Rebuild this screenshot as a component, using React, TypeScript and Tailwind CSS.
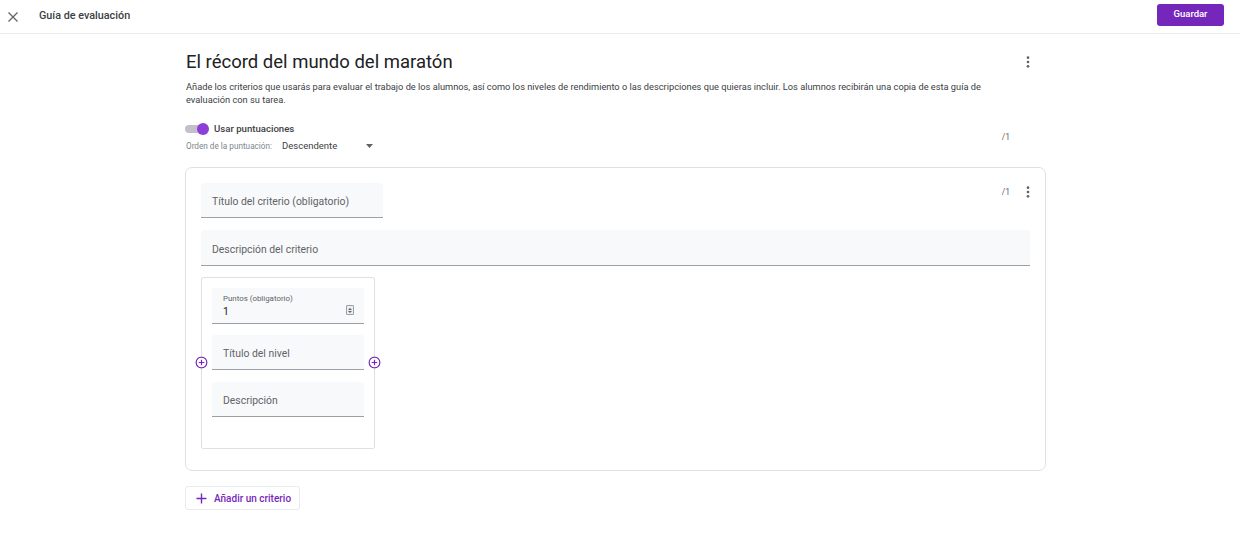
import React from "react";

const font = { fontFamily: "Roboto, 'Noto Sans', Arial, sans-serif" };

function Kebab() {
  return (
    <svg width="16" height="16" viewBox="0 0 24 24" fill="#5f6368">
      <circle cx="12" cy="5.5" r="2" />
      <circle cx="12" cy="12" r="2" />
      <circle cx="12" cy="18.5" r="2" />
    </svg>
  );
}

function PlusCircle() {
  return (
    <svg width="13" height="13" viewBox="0 0 14 14" className="bg-white rounded-full">
      <circle cx="7" cy="7" r="5.8" fill="white" stroke="#7627bb" strokeWidth="1.3" />
      <path d="M7 4v6M4 7h6" stroke="#7627bb" strokeWidth="1.3" />
    </svg>
  );
}

function Field({ label, w, h = "h-[35px]" }: { label: string; w: string; h?: string }) {
  return (
    <div className={`${w} ${h} bg-[#f8f9fa] border-b border-[#9aa0a6] flex items-center px-[11px] pt-[4px] rounded-t-[3px]`}>
      <span className="text-[10.4px] text-[#5f6368]">{label}</span>
    </div>
  );
}

export default function App() {
  return (
    <div className="w-[1240px] h-[544px] bg-white overflow-hidden text-[#202124]" style={font}>
      {/* header */}
      <div className="h-[34px] border-b border-[#e8eaed] flex items-center pl-[7px] pr-[16px]">
        <svg width="12" height="12" viewBox="0 0 12 12">
          <path d="M1.5 1.5l9 9M10.5 1.5l-9 9" stroke="#5f6368" strokeWidth="1.3" />
        </svg>
        <span className="ml-[20px] text-[10.8px] font-medium text-[#3c4043]">Guía de evaluación</span>
        <div className="flex-1" />
        <button className="w-[67px] h-[22px] bg-[#7627bb] rounded-[3px] text-white text-[9.5px] font-medium mt-[-4px]">
          Guardar
        </button>
      </div>

      <div className="ml-[185px] w-[861px]">
        {/* title row */}
        <div className="flex items-center justify-between pt-[16px]">
          <h1 className="text-[18.5px] leading-[24px] text-[#202124] pl-[1px]">El récord del mundo del maratón</h1>
          <div className="mr-[10px]">
            <Kebab />
          </div>
        </div>
        <p className="mt-[6px] pl-[1px] text-[9.25px] leading-[13px] text-[#3c4043] w-[815px]">
          Añade los criterios que usarás para evaluar el trabajo de los alumnos, así como los niveles de rendimiento o las descripciones que quieras incluir. Los alumnos recibirán una copia de esta guía de evaluación con su tarea.
        </p>

        {/* toggle + order */}
        <div className="flex items-center justify-between mt-[16px]">
          <div className="flex flex-col">
            <div className="flex items-center h-[14px]">
              <div className="relative w-[24px] h-[14px] flex items-center">
                <div className="w-[20px] h-[8px] rounded-full bg-[#c5bfcc]" />
                <div className="absolute left-[12px] top-[1px] w-[12px] h-[12px] rounded-full bg-[#8d3fd6]" />
              </div>
              <span className="ml-[5px] text-[9.6px] font-medium text-[#3c4043]">Usar puntuaciones</span>
            </div>
            <div className="flex items-center h-[14px] mt-[3px]">
              <span className="pl-[1px] text-[8.2px] text-[#80868b] w-[97px]">Orden de la puntuación:</span>
              <span className="text-[9.5px] text-[#3c4043] w-[84px]">Descendente</span>
              <svg width="7" height="4" viewBox="0 0 7 4">
                <path d="M0 0h7L3.5 4z" fill="#5f6368" />
              </svg>
            </div>
          </div>
          <span className="text-[8.5px] text-[#5f6368] mr-[36px] mt-[-1px]">/1</span>
        </div>

        {/* card */}
        <div className="mt-[14px] border border-[#e0e0e0] rounded-[7px] pt-[15px] pb-[21px] px-[15px]">
          <div className="flex items-start justify-between">
            <Field label="Título del criterio (obligatorio)" w="w-[182px]" />
            <div className="flex items-center mt-[1px] mr-[-6px]">
              <span className="text-[8.5px] text-[#5f6368]">/1</span>
              <div className="ml-[10px]">
                <Kebab />
              </div>
            </div>
          </div>
          <div className="mt-[12px]">
            <Field label="Descripción del criterio" w="w-full" h="h-[36px]" />
          </div>
          <div className="mt-[11px] relative w-[174px] h-[172px] border border-[#e0e0e0] rounded-[2px] px-[10px] pt-[10px]">
            <div className="w-[152px] h-[36px] bg-[#f8f9fa] border-b border-[#9aa0a6] px-[11px] pt-[6px] relative">
              <div className="text-[7.9px] text-[#5f6368] leading-[9px]">Puntos (obligatorio)</div>
              <div className="text-[10.4px] text-[#202124] leading-[14px] mt-[2px]">1</div>
              <div className="absolute right-[10px] top-[17px] w-[8px] h-[10px] border border-[#9aa0a6] rounded-[1px] bg-[#eeeeee] flex flex-col items-center justify-center gap-[1px]">
                <svg width="4" height="2" viewBox="0 0 4 2"><path d="M0 2h4L2 0z" fill="#5f6368" /></svg>
                <svg width="4" height="2" viewBox="0 0 4 2"><path d="M0 0h4L2 2z" fill="#5f6368" /></svg>
              </div>
            </div>
            <div className="mt-[11px]">
              <Field label="Título del nivel" w="w-[152px]" />
            </div>
            <div className="mt-[12px]">
              <Field label="Descripción" w="w-[152px]" />
            </div>
            <div className="absolute left-[-7px] top-[78px]">
              <PlusCircle />
            </div>
            <div className="absolute right-[-7px] top-[78px]">
              <PlusCircle />
            </div>
          </div>
        </div>

        {/* add criterion */}
        <button className="mt-[15px] h-[24px] w-[115px] border border-[#e8eaed] rounded-[3px] flex items-center pl-[10px]">
          <svg width="11" height="11" viewBox="0 0 11 11">
            <path d="M5.5 0.5v10M0.5 5.5h10" stroke="#7627bb" strokeWidth="1.4" />
          </svg>
          <span className="ml-[7px] text-[10px] font-medium text-[#7627bb]">Añadir un criterio</span>
        </button>
      </div>
    </div>
  );
}
